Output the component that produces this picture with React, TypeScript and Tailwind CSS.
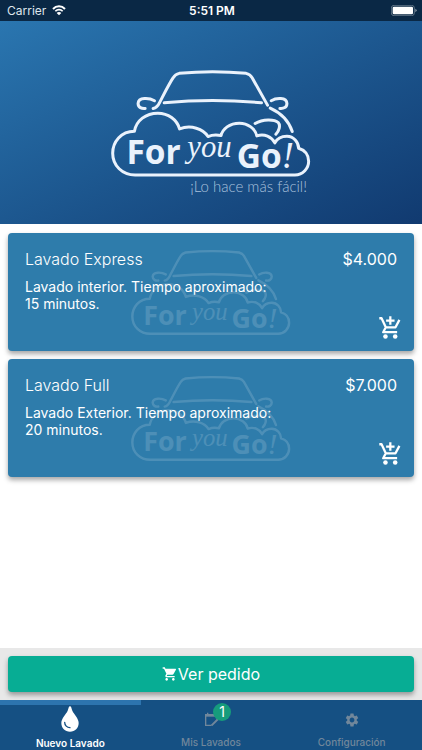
import { MdSettings, MdShoppingCart } from "react-icons/md";

const services = [
  {
    name: "Lavado Express",
    price: "$4.000",
    description: "Lavado interior. Tiempo aproximado:",
    time: "15 minutos.",
  },
  {
    name: "Lavado Full",
    price: "$7.000",
    description: "Lavado Exterior. Tiempo aproximado:",
    time: "20 minutos.",
  },
];

const Logo = ({ className }: { className?: string }) => (
  <svg viewBox="336 206 598 326" fill="none" className={className}>
    <g
      stroke="currentColor"
      strokeWidth="9"
      strokeLinecap="round"
      strokeLinejoin="round"
    >
      <path d="M462 324Q474 322 482 305C495 280 510 250 522 232Q528 222 540 219Q640 209 740 219Q752 222 758 232L804 314" />
      <path d="M495 307Q640 294 786 307" />
      <path d="M466 301C450 292 418 290 417 309C417 321 428 325 438 324" />
      <path d="M815 301C830 292 861 290 862 309C862 321 852 325 841 324" />
      <path d="M812 323C845 338 868 362 878 393" />
      <path d="M767 369C790 355 825 356 836 366C844 375 838 392 829 401" />
      <path d="M406 392C366 392 341 424 341 458C341 495 370 523 408 523H886C910 523 927 503 927 482C927 463 915 448 897 443C897 425 882 407 862 407C845 407 832 415 826 427C816 408 795 399 772 406C768 385 745 368 720 368C690 368 670 385 665 405C650 402 640 402 626 408C612 385 575 372 541 385C533 357 507 338 476 338C440 338 412 360 406 392Z" />
    </g>
    <g fill="currentColor">
      <text x="382" y="490" className="font-['Open_Sans',sans-serif] text-[100px] font-bold">
        For
      </text>
      <text x="564" y="470" className="font-['Liberation_Serif',serif] text-[92px] italic">
        you
      </text>
      <text x="712" y="502" className="font-['Open_Sans',sans-serif] text-[100px] font-bold">
        Go
      </text>
      <text x="846" y="502" className="font-['Liberation_Serif',serif] text-[112px] italic">
        !
      </text>
    </g>
  </svg>
);

const AddToCartIcon = () => (
  <svg viewBox="24 28 72 74" className="h-6 w-6" fill="none">
    <path
      d="M27 38H34L47 66H77L89 43M47 66L39 81H82M61 32V58M48 45H74"
      stroke="currentColor"
      strokeWidth="7"
      strokeLinejoin="round"
    />
    <circle cx="46" cy="94" r="7" fill="currentColor" />
    <circle cx="76" cy="94" r="7" fill="currentColor" />
  </svg>
);

const App = () => {
  return (
    <div className="min-h-screen flex flex-col bg-white font-[Inter,sans-serif] text-white">
      <div className="h-[21px] shrink-0 grid grid-cols-3 items-center bg-[#0a2845] pl-[7px] pr-[5px] text-xs">
        <div className="flex items-center gap-[6px] text-[#dfe6ec]">
          <span>Carrier</span>
          <svg viewBox="0 0 42 32" className="w-[14px]" fill="none">
            <path d="M3 12C13 1 29 1 39 12" stroke="white" strokeWidth="6" />
            <path d="M10 19C16 12 26 12 32 19" stroke="white" strokeWidth="5" />
            <path d="M21 31L14 24C18 20 24 20 28 24Z" fill="white" />
          </svg>
        </div>
        <span className="text-center font-semibold">5:51 PM</span>
        <svg viewBox="0 0 78 33" className="w-[26px] justify-self-end" fill="none">
          <rect x="1" y="1" width="69" height="31" rx="8" stroke="#8494a2" strokeWidth="2" />
          <rect x="5" y="5" width="61" height="23" rx="4" fill="white" />
          <path d="M73 11Q77 13 77 16T73 22Z" fill="#8494a2" />
        </svg>
      </div>

      <header className="h-[203px] shrink-0 flex flex-col items-center bg-gradient-to-br from-[#2a76b0] to-[#113a70] pt-12">
        <Logo className="w-[200px] text-[#eaf2fc]" />
        <p className="w-[200px] pr-1 text-right font-[Lato,sans-serif] text-[15px] leading-4 font-light text-[#a9c1dc]">
          ¡Lo hace más fácil!
        </p>
      </header>

      <main className="grow flex flex-col gap-2 p-2 pt-[9px]">
        {services.map((service) => (
          <article
            key={service.name}
            className="relative h-[118px] rounded-sm bg-[#2e7cab] shadow-[0_3px_5px_rgba(0,0,0,0.35)]"
          >
            <Logo className="absolute left-1/2 top-4 w-40 -translate-x-1/2 text-white opacity-15" />
            <div className="relative h-full px-[17px] pt-[14px]">
              <div className="flex justify-between text-base leading-6">
                <h2 className="font-light">{service.name}</h2>
                <p>{service.price}</p>
              </div>
              <p className="pt-[7px] text-sm leading-[17px]">
                {service.description}
                <br />
                {service.time}
              </p>
            </div>
            <button
              type="button"
              aria-label={`Agregar ${service.name}`}
              className="absolute bottom-3 right-3 cursor-pointer"
            >
              <AddToCartIcon />
            </button>
          </article>
        ))}
      </main>

      <div className="bg-[#e8e8e8] p-2">
        <button
          type="button"
          className="w-full h-9 flex justify-center items-center rounded-sm bg-[#07ad94] text-base shadow-[0_3px_5px_rgba(0,0,0,0.35)] cursor-pointer"
        >
          <MdShoppingCart className="h-4 w-4" /> Ver pedido
        </button>
      </div>

      <nav className="h-[50px] shrink-0 grid grid-cols-3 bg-[#155083] text-[10px] font-medium text-[#71879b]">
        <button
          type="button"
          className="flex flex-col items-center border-t-5 border-[#2d74ae] font-semibold text-white cursor-pointer"
        >
          <svg viewBox="0 0 54 78" className="mt-px h-[26px]">
            <path d="M27 1C31 1 31 7 34 14C39 25 53 37 53 51C53 66 42 77 27 77S1 66 1 51C1 37 15 25 20 14C23 7 23 1 27 1Z" fill="white" />
            <path d="M11 49C11 58 18 65 27 65" fill="none" stroke="#155083" strokeWidth="4" strokeLinecap="round" />
          </svg>
          <span className="mt-1">Nuevo Lavado</span>
        </button>
        <button type="button" className="flex flex-col items-center pt-3 cursor-pointer">
          <span className="relative">
            <svg viewBox="0 0 24 24" className="h-4 w-4" fill="none" stroke="currentColor">
              <path d="M13 20H4V4H20M7 1V5" strokeWidth="2" />
              <path d="M3 5H20" strokeWidth="4" />
              <path d="M13 20L23 10" strokeWidth="3" />
            </svg>
            <span className="absolute -top-[9px] left-[10px] h-[18px] w-[18px] rounded-full bg-[#169c7c] text-center text-sm leading-[18px] font-normal text-white">
              1
            </span>
          </span>
          <span className="mt-[7px]">Mis Lavados</span>
        </button>
        <button type="button" className="flex flex-col items-center pt-3 cursor-pointer">
          <MdSettings className="h-4 w-4" />
          <span className="mt-[7px]">Configuración</span>
        </button>
      </nav>
    </div>
  );
};

export default App;
